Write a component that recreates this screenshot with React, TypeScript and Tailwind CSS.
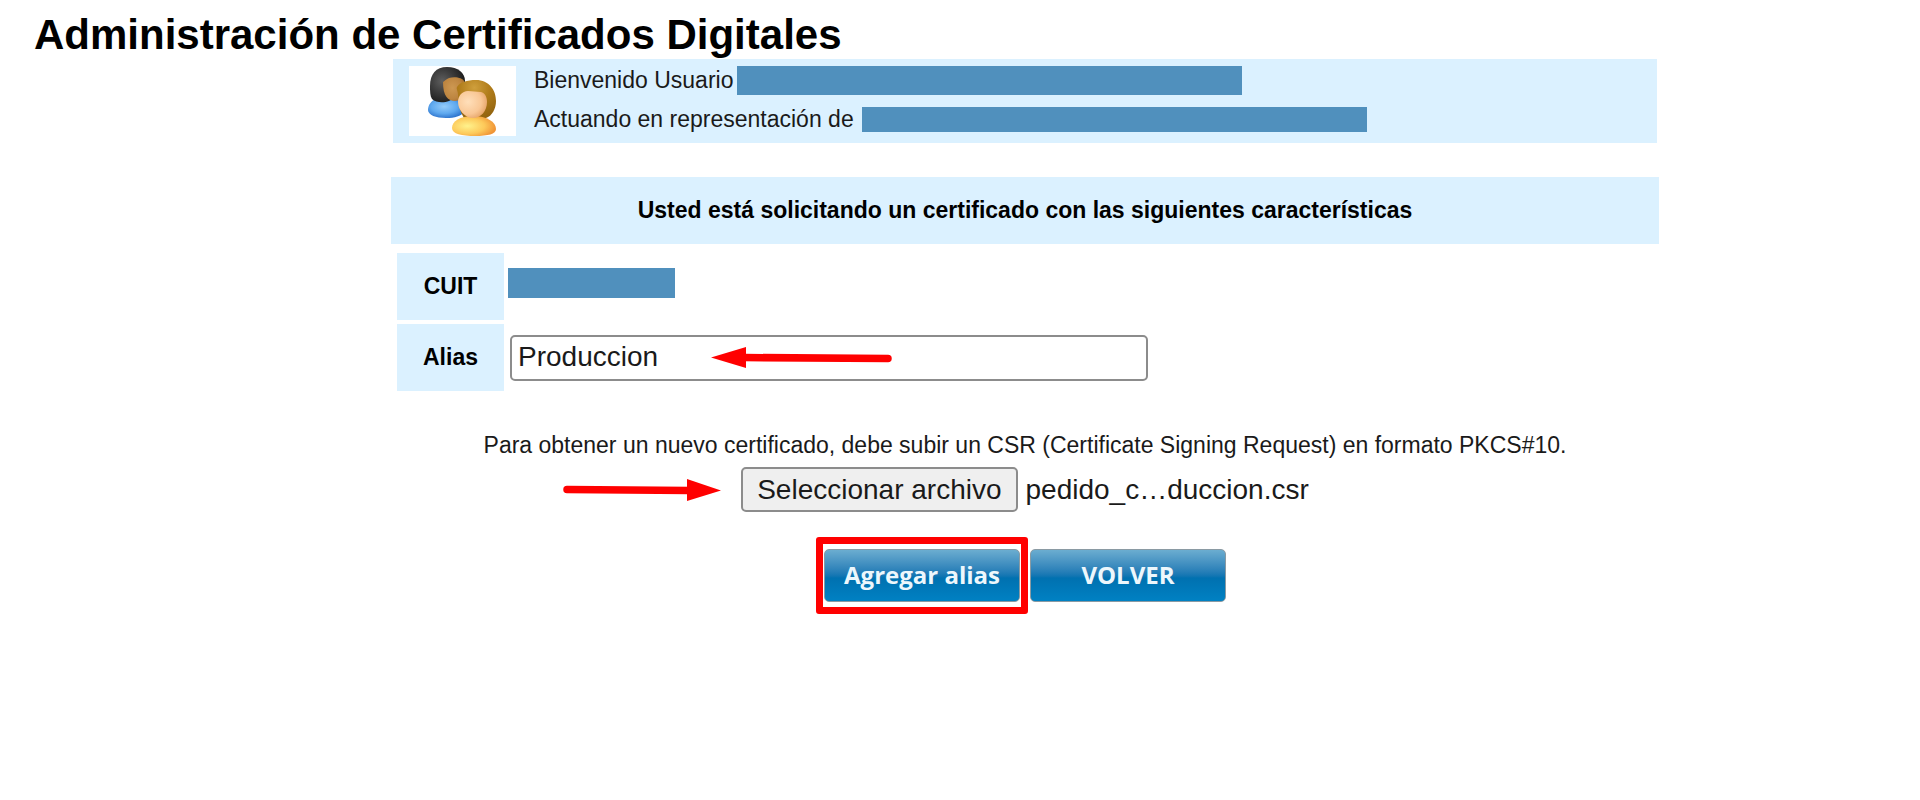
import React, { useState } from "react";

function UsersIcon() {
  return (
    <svg viewBox="0 0 107 70" className="block h-[70px] w-[107px]" aria-hidden="true">
      <defs>
        <radialGradient id="hairDark" cx="0.35" cy="0.4" r="0.65">
          <stop offset="0" stopColor="#5e5e5e" />
          <stop offset="0.5" stopColor="#3c3c3c" />
          <stop offset="1" stopColor="#1c1c1c" />
        </radialGradient>
        <radialGradient id="faceDark" cx="0.45" cy="0.45" r="0.75">
          <stop offset="0" stopColor="#cd9852" />
          <stop offset="0.6" stopColor="#bd8540" />
          <stop offset="1" stopColor="#9c6426" />
        </radialGradient>
        <radialGradient id="shirtBlue" cx="0.45" cy="0.4" r="0.6">
          <stop offset="0" stopColor="#94cbfa" />
          <stop offset="0.6" stopColor="#5fa9ef" />
          <stop offset="1" stopColor="#3278cf" />
        </radialGradient>
        <radialGradient id="hairBlond" cx="0.45" cy="0.2" r="0.8">
          <stop offset="0" stopColor="#cf9f3c" />
          <stop offset="0.5" stopColor="#b07c1a" />
          <stop offset="1" stopColor="#946510" />
        </radialGradient>
        <radialGradient id="faceLight" cx="0.35" cy="0.4" r="0.75">
          <stop offset="0" stopColor="#ffdfba" />
          <stop offset="0.6" stopColor="#f9c795" />
          <stop offset="1" stopColor="#e09a5c" />
        </radialGradient>
        <radialGradient id="shirtYellow" cx="0.35" cy="0.5" r="0.65">
          <stop offset="0" stopColor="#fff28c" />
          <stop offset="0.6" stopColor="#fdc95a" />
          <stop offset="1" stopColor="#f09436" />
        </radialGradient>
      </defs>
      <rect width="107" height="70" fill="#fff" />
      <path d="M19 44c0-5 3-9 8-11h26c2 4 2 9 2 13-3 4-9 6-18 6-10 0-18-3-18-8z" fill="url(#shirtBlue)" />
      <path d="M21 20C21 8 27 1 38 1s18 6 18 14l-2 12-14 8c-5 2-13 2-17-2-2-3-2-8-2-13z" fill="url(#hairDark)" />
      <path d="M34 16c2-1 3-3 6-4 6-2 14 0 15 3v10c0 6-4 10-9 10-7 0-12-5-12-19z" fill="url(#faceDark)" />
      <path d="M49 29c0-4-2-6-1-8 3-5 10-7 19-7 13 0 20 10 20 21 0 8-4 15-10 17H55c-4-6-6-15-6-23z" fill="url(#hairBlond)" />
      <path d="M43 62c0-7 8-12 21-12 14 0 23 6 23 13 0 5-8 7-21 7s-23-2-23-8z" fill="url(#shirtYellow)" />
      <path d="M49 36c0-6 4-11 10-11 5 0 8 1 13 1 4 1 6 5 6 10 0 9-6 16-14 16s-15-8-15-16z" fill="url(#faceLight)" />
    </svg>
  );
}

function Redacted({ className }: { className: string }) {
  return <span className={`block bg-[#5090bd] ${className}`} aria-hidden="true" />;
}

const cellLabel = "h-[67px] w-[107px] bg-[#dbf1ff] p-0 text-center font-bold";
const actionButton =
  "h-[53px] w-[196px] rounded-[5px] border border-[#8a9aa3] bg-linear-to-b from-[#6badd0] via-[#0071b0] via-55% to-[#0081c3] pb-0.5 font-['Open_Sans',sans-serif] text-[24px] leading-8 font-bold text-[#edf7fc]";

export default function App() {
  const [alias, setAlias] = useState("Produccion");
  const [fileName, setFileName] = useState("pedido_c…duccion.csr");

  return (
    <div className="bg-white pb-8 font-['Liberation_Sans',Arial,sans-serif] text-[23px] leading-[39px] text-black">
      <h1 className="px-[34px] pt-2.5 text-[42px] leading-[49px] font-bold">
        Administración de Certificados Digitales
      </h1>

      <main className="pl-[130px]">
        <div className="mx-auto w-[1268px] max-w-full">
          <header className="mx-0.5 flex h-[84px] items-center gap-[18px] bg-[#dbf1ff] pl-4 text-[#1a1a1a]">
            <UsersIcon />
            <div className="pb-0.5">
              <p className="flex items-center gap-1">
                Bienvenido Usuario
                <Redacted className="h-[29px] w-[505px]" />
              </p>
              <p className="flex items-center gap-2">
                Actuando en representación de
                <Redacted className="h-[25px] w-[505px]" />
              </p>
            </div>
          </header>

          <form onSubmit={(e) => e.preventDefault()}>
            <h2 className="mt-[34px] bg-[#dbf1ff] py-3.5 text-center font-bold">
              Usted está solicitando un certificado con las siguientes características
            </h2>

            <table className="mt-[5px] ml-0.5 border-separate border-spacing-1">
              <tbody>
                <tr>
                  <th scope="row" className={cellLabel}>CUIT</th>
                  <td className="p-0 pb-2">
                    <Redacted className="h-[30px] w-[167px]" />
                  </td>
                </tr>
                <tr>
                  <th scope="row" className={cellLabel}>
                    <label htmlFor="alias">Alias</label>
                  </th>
                  <td className="p-0 pl-0.5">
                    <div className="relative">
                      <input
                        id="alias"
                        type="text"
                        value={alias}
                        onChange={(e) => setAlias(e.target.value)}
                        className="block h-[46px] w-[638px] rounded-[5px] border-2 border-[#8c8c8c] bg-white px-1.5 pb-0.5 text-[28px] text-[#1a1a1a]"
                      />
                      <svg
                        viewBox="0 0 182 22"
                        className="pointer-events-none absolute top-3 left-[201px] h-[22px] w-[182px]"
                        aria-hidden="true"
                      >
                        <path d="M0 10.5 35 0v21z" fill="#f00" />
                        <path d="M33 10.5 177 11.5" stroke="#f00" strokeWidth="7.5" strokeLinecap="round" />
                      </svg>
                    </div>
                  </td>
                </tr>
              </tbody>
            </table>

            <p className="mt-[31px] text-center text-[#1a1a1a]">
              Para obtener un nuevo certificado, debe subir un CSR (Certificate Signing Request) en formato PKCS#10.
            </p>

            <div className="mt-0.5 flex justify-center text-[28px] text-[#1a1a1a]">
              <div className="relative flex items-center gap-2">
                <input
                  id="csr"
                  type="file"
                  className="sr-only"
                  onChange={(e) => setFileName(e.target.files?.[0]?.name ?? "")}
                />
                <label
                  htmlFor="csr"
                  className="flex h-[45px] items-center rounded-[5px] border-2 border-[#8c8c8c] bg-[#efefef] px-3.5"
                >
                  Seleccionar archivo
                </label>
                <span>{fileName}</span>
                <svg
                  viewBox="0 0 158 22"
                  className="pointer-events-none absolute top-3 right-full mr-5 h-[22px] w-[158px]"
                  aria-hidden="true"
                >
                  <path d="M158 11.5 124 0v22z" fill="#f00" />
                  <path d="M4 10.5 126 11.5" stroke="#f00" strokeWidth="7.5" strokeLinecap="round" />
                </svg>
              </div>
            </div>

            <div className="mt-[37px] flex justify-center gap-2.5">
              <div className="relative">
                <button type="submit" className={actionButton}>Agregar alias</button>
                <span className="pointer-events-none absolute -inset-x-2 -inset-y-3 rounded-[3px] border-7 border-[#f00]" />
              </div>
              <button type="button" className={actionButton}>VOLVER</button>
            </div>
          </form>
        </div>
      </main>
    </div>
  );
}
